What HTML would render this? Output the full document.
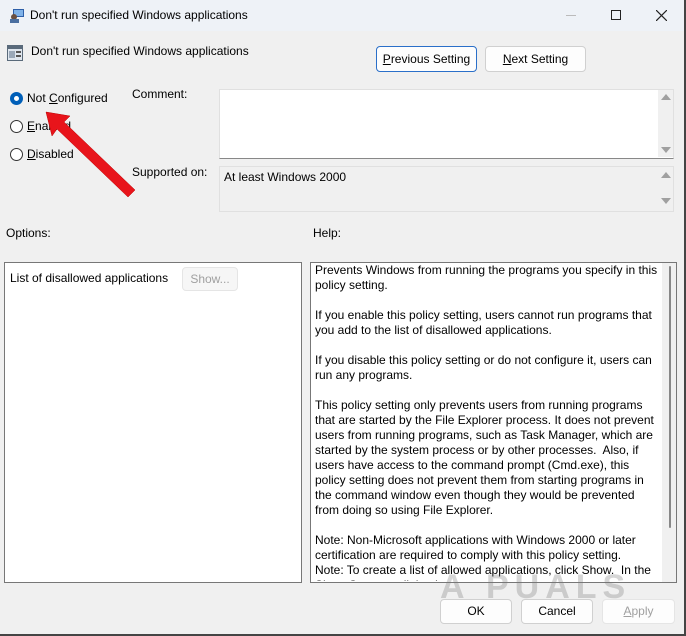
<!DOCTYPE html>
<html><head><style>
*{margin:0;padding:0;box-sizing:border-box}
body{width:686px;height:636px;overflow:hidden;background:#f0f0f0;font-family:"Liberation Sans",sans-serif;font-size:12px;color:#000;position:relative}
.a{position:absolute;white-space:nowrap}
.btn{position:absolute;background:#fdfdfd;border:1px solid #d0d0d0;border-radius:4px;text-align:center;font-size:12px}
.rad{position:absolute;width:13px;height:13px;border:1px solid #333;border-radius:50%;background:#fff}
u{text-decoration:underline}
</style></head><body>
<div class="a" style="left:0;top:0;width:686px;height:31px;background:#eef2f7"></div>
<svg class="a" style="left:9px;top:8px" width="16" height="16"><rect x="4" y="1" width="11" height="8" fill="#2d5fa8"/><rect x="5" y="2" width="9" height="6" fill="#7fb2e8"/><circle cx="5" cy="9" r="3" fill="#6a5040"/><rect x="1" y="11" width="9" height="4" fill="#4a6fa0"/></svg>
<div class="a" style="left:30px;top:8px">Don't run specified Windows applications</div>
<div class="a" style="left:566px;top:15px;width:10px;height:1px;background:#bbb"></div>
<div class="a" style="left:611px;top:10px;width:10px;height:10px;border:1px solid #222"></div>
<svg class="a" style="left:656px;top:10px" width="11" height="11"><path d="M0 0L11 11M11 0L0 11" stroke="#222" stroke-width="1.2"/></svg>
<div class="a" style="left:684px;top:0;width:2px;height:636px;background:#444"></div>
<div class="a" style="left:0;top:634px;width:686px;height:2px;background:#444"></div>

<svg class="a" style="left:7px;top:45px" width="16" height="16"><rect x="0" y="0" width="16" height="16" fill="#5a6a7a"/><rect x="1" y="4" width="14" height="11" fill="#dfe6ee"/><rect x="2" y="6" width="6" height="7" fill="#9aa8b8"/><rect x="9" y="6" width="5" height="2" fill="#555"/><rect x="9" y="10" width="5" height="2" fill="#555"/></svg>
<div class="a" style="left:31px;top:44px">Don't run specified Windows applications</div>
<div class="btn" style="left:376px;top:46px;width:101px;height:26px;border:1px solid #2a6fc9;line-height:24px"><u>P</u>revious Setting</div>
<div class="btn" style="left:485px;top:46px;width:101px;height:26px;line-height:24px"><u>N</u>ext Setting</div>

<div class="rad" style="left:10px;top:92px;border:4px solid #005fb8"></div>
<div class="a" style="left:27px;top:91px">Not <u>C</u>onfigured</div>
<div class="rad" style="left:10px;top:120px"></div>
<div class="a" style="left:27px;top:119px"><u>E</u>nabled</div>
<div class="rad" style="left:10px;top:148px"></div>
<div class="a" style="left:27px;top:147px"><u>D</u>isabled</div>

<div class="a" style="left:132px;top:87px">Comment:</div>
<div class="a" style="left:219px;top:89px;width:455px;height:70px;background:#fff;border:1px solid #e0e0e0;border-bottom:1px solid #888"></div>
<div class="a" style="left:658px;top:90px;width:15px;height:67px;background:#f0f0f0"></div>
<div class="a" style="left:661px;top:94px;width:0;height:0;border:5px solid transparent;border-bottom:6px solid #a0a0a0;border-top:0"></div>
<div class="a" style="left:661px;top:147px;width:0;height:0;border:5px solid transparent;border-top:6px solid #a0a0a0;border-bottom:0"></div>
<div class="a" style="left:132px;top:165px">Supported on:</div>
<div class="a" style="left:219px;top:166px;width:455px;height:46px;border:1px solid #e0e0e0"></div>
<div class="a" style="left:224px;top:170px">At least Windows 2000</div>
<div class="a" style="left:661px;top:172px;width:0;height:0;border:5px solid transparent;border-bottom:6px solid #a0a0a0;border-top:0"></div>
<div class="a" style="left:661px;top:198px;width:0;height:0;border:5px solid transparent;border-top:6px solid #a0a0a0;border-bottom:0"></div>

<div class="a" style="left:6px;top:226px">Options:</div>
<div class="a" style="left:313px;top:226px">Help:</div>
<div class="a" style="left:4px;top:262px;width:298px;height:321px;background:#fff;border:1px solid #777"></div>
<div class="a" style="left:10px;top:271px">List of disallowed applications</div>
<div class="btn" style="left:182px;top:267px;width:56px;height:24px;line-height:22px;background:#f6f6f6;color:#a0a0a0;border-color:#e5e5e5">Show...</div>

<div class="a" style="left:310px;top:262px;width:367px;height:321px;background:#fff;border:1px solid #777"></div>
<div class="a" style="left:662px;top:263px;width:14px;height:319px;background:#f0f0f0"></div>
<div class="a" style="left:669px;top:266px;width:2px;height:262px;background:#888;border-radius:1px"></div>
<div class="a" style="left:315px;top:263px;line-height:15px;white-space:pre;font-size:12px;height:318px;overflow:hidden">Prevents Windows from running the programs you specify in this
policy setting.

If you enable this policy setting, users cannot run programs that
you add to the list of disallowed applications.

If you disable this policy setting or do not configure it, users can
run any programs.

This policy setting only prevents users from running programs
that are started by the File Explorer process. It does not prevent
users from running programs, such as Task Manager, which are
started by the system process or by other processes.  Also, if
users have access to the command prompt (Cmd.exe), this
policy setting does not prevent them from starting programs in
the command window even though they would be prevented
from doing so using File Explorer.

Note: Non-Microsoft applications with Windows 2000 or later
certification are required to comply with this policy setting.
Note: To create a list of allowed applications, click Show.  In the
Show Contents dialog box...</div>

<div class="a" style="left:440px;top:568px;font:bold 34px 'Liberation Sans',sans-serif;color:rgba(120,120,120,.3);letter-spacing:6px">A&nbsp;PUALS</div>

<div class="btn" style="left:440px;top:599px;width:72px;height:25px;line-height:23px">OK</div>
<div class="btn" style="left:521px;top:599px;width:72px;height:25px;line-height:23px">Cancel</div>
<div class="btn" style="left:602px;top:599px;width:73px;height:25px;line-height:23px;color:#a0a0a0;border-color:#e5e5e5"><u>A</u>pply</div>

<svg class="a" style="left:0;top:0" width="686" height="636">
<polygon points="46,112 70,116 64,122 135,190 128,197 57,129 52,136" fill="#e8141b" stroke="#b00" stroke-width="0.5"/>
</svg>
</body></html>
